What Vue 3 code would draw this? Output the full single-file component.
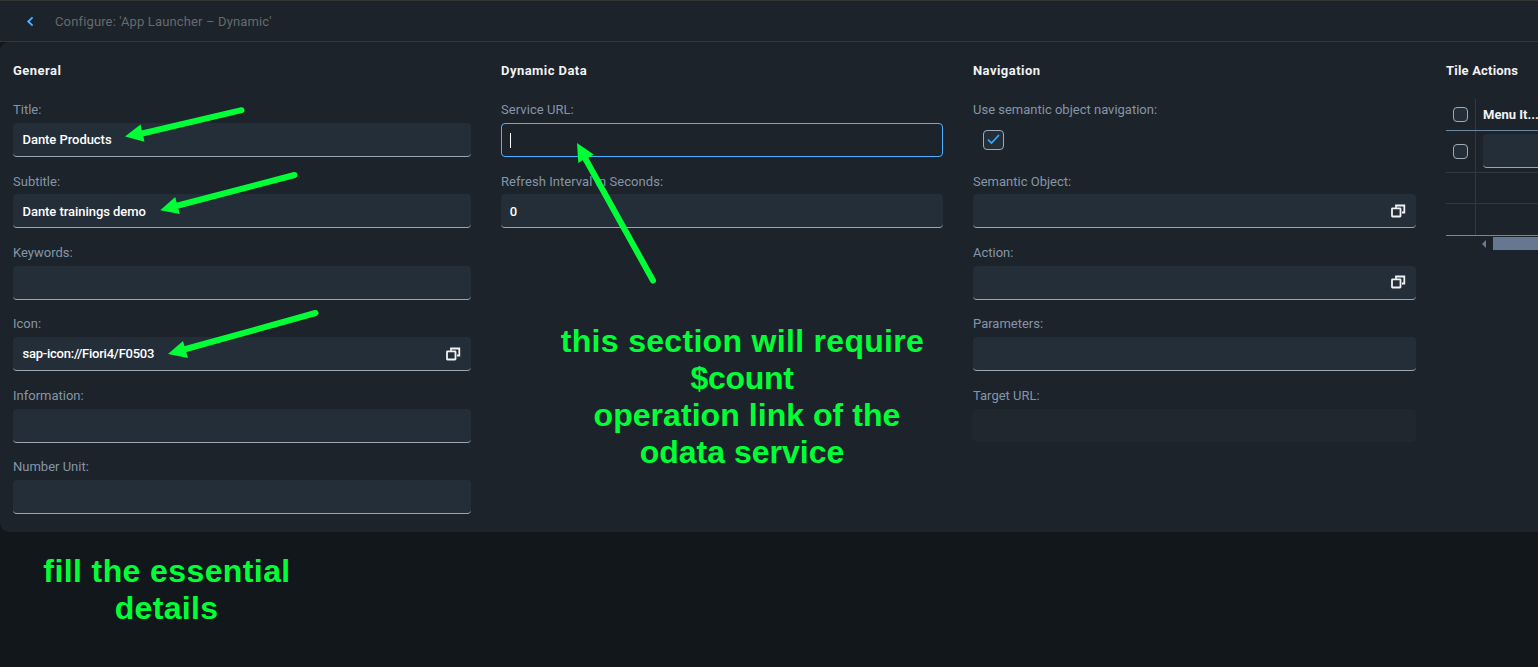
<script setup>
const general = [
  { label: 'Title:', value: 'Dante Products' },
  { label: 'Subtitle:', value: 'Dante trainings demo' },
  { label: 'Keywords:' },
  { label: 'Icon:', value: 'sap-icon://Fiori4/F0503', help: true, tight: true },
  { label: 'Information:' },
  { label: 'Number Unit:' },
]
const dynamicData = [
  { label: 'Service URL:', focused: true },
  { label: 'Refresh Interval in Seconds:', value: '0' },
]
const navigation = [
  { label: 'Use semantic object navigation:', check: true },
  { label: 'Semantic Object:', help: true },
  { label: 'Action:', help: true },
  { label: 'Parameters:' },
  { label: 'Target URL:', disabled: true },
]
const sections = [
  { title: 'General', cls: 'general', fields: general },
  { title: 'Dynamic Data', cls: 'dynamic', fields: dynamicData },
  { title: 'Navigation', cls: 'navigation', fields: navigation },
]
</script>

<template>
  <div class="page">
    <header class="bar">
      <svg class="back" width="8" height="11" viewBox="0 0 8 11"><path d="M6.600 1.300 2.200 5.500l4.400 4.200" /></svg>
      <span class="bar-title">Configure: 'App Launcher – Dynamic'</span>
    </header>
    <main class="panel">
      <section v-for="s in sections" :key="s.title" :class="['section', s.cls]">
        <h2>{{ s.title }}</h2>
        <div v-for="f in s.fields" :key="f.label" class="field">
          <label>{{ f.label }}</label>
          <div v-if="f.check" class="check-wrap">
            <div class="checkbox checked">
              <svg width="13" height="11" viewBox="0 0 13 11"><path d="M1 5.700 4.500 9 12 1" /></svg>
            </div>
          </div>
          <div v-else :class="['input', { focused: f.focused, disabled: f.disabled }]">
            <i v-if="f.focused" class="caret"></i>
            <span :class="{ tight: f.tight }">{{ f.value }}</span>
            <svg v-if="f.help" class="help" width="15" height="14" viewBox="0 0 15 14">
              <path d="M5 3.800V1.500H13.300V8.500H11" />
              <rect x="1" y="4.300" width="8.500" height="8.200" rx="0.500" />
            </svg>
          </div>
        </div>
      </section>
      <section class="section tiles">
        <h2>Tile Actions</h2>
        <div class="table">
          <div class="row head">
            <div class="sel"><div class="checkbox small"></div></div>
            <div class="cell">Menu It...</div>
          </div>
          <div class="row first">
            <div class="sel"><div class="checkbox small"></div></div>
            <div class="cell"><div class="input"></div></div>
          </div>
          <div class="row second"><div class="sel"></div></div>
          <div class="row third"><div class="sel"></div></div>
        </div>
        <div class="scroll">
          <svg width="4" height="8" viewBox="0 0 4 8"><path d="M4 0v8L0 4z" /></svg>
          <div class="thumb"></div>
        </div>
      </section>
    </main>

    <svg class="arrows" width="1538" height="667" viewBox="0 0 1538 667">
      <path d="M241.500 110.200 140 134" /><polygon points="125,136.600 140.500,124.500 144.500,141.700" />
      <path d="M294.500 175 176 206" /><polygon points="160.300,210.300 175.200,197 179.800,214" />
      <path d="M315.500 313 184 349.500" /><polygon points="168,354 183,341 188,358" />
      <path d="M653 280.500 585 158" /><polygon points="577,143 593.700,154.400 588,158 583,160 578.300,163" />
    </svg>
    <div class="note note-service">
      <div class="l1">this section will require</div>
      <div class="l2">$count</div>
      <div class="l3">operation link of the</div>
      <div>odata service</div>
    </div>
    <div class="note note-fill">fill the essential<div class="l5">details</div></div>
  </div>
</template>

<style>
body {
  margin: 0;
  background: #12171b;
  overflow: hidden;
}
</style>

<style scoped>
* {
  box-sizing: border-box;
}
.page {
  position: relative;
  width: 1538px;
  height: 667px;
  overflow: hidden;
  background: #12171b;
  font: 13px/18px "Roboto", "Liberation Sans", sans-serif;
  color: #fff;
}
.bar {
  height: 42px;
  display: flex;
  align-items: center;
  padding-left: 26px;
  border-top: 1px solid #343636;
  border-bottom: 1px solid #2e3742;
  background: #1d232a;
}
.back {
  margin-right: 21px;
}
.back path {
  fill: none;
  stroke: #4db1ff;
  stroke-width: 1.8;
}
.bar-title {
  padding-top: 2px;
  letter-spacing: 0.14px;
  color: #666a6e;
}
.panel {
  height: 490px;
  display: flex;
  border-radius: 9px 0 0 9px;
  background: #1d232a;
  padding: 19px 0 0 13px;
}
.section {
  flex: none;
}
.general {
  width: 458px;
  margin-right: 30px;
}
.dynamic {
  width: 442px;
  margin-right: 30px;
}
.navigation {
  width: 443px;
  margin-right: 30px;
}
.tiles {
  width: 110px;
}
h2 {
  margin: 0 0 19px;
  font-size: 13px;
  line-height: 19px;
  font-weight: 700;
  letter-spacing: 0.45px;
  color: #f0f2f4;
}
.tiles h2 {
  letter-spacing: 0.2px;
}
.field {
  height: 71.4px;
}
label {
  display: block;
  height: 24px;
  padding-top: 0.2px;
  line-height: 22px;
  color: #8396a8;
}
.dynamic label {
  letter-spacing: 0.06px;
}
.input {
  height: 34px;
  display: flex;
  align-items: center;
  padding: 0 10px 0 9.500px;
  border: 0 solid #9aa7b2;
  border-bottom-width: 1px;
  border-radius: 4px;
  background: #242e38;
  font-weight: 500;
}
.input span {
  margin-top: 1.400px;
  letter-spacing: -0.05px;
}
.dynamic .input span {
  margin-left: -0.7px;
}
.input .tight {
  letter-spacing: -0.24px;
}
.input.focused {
  border: 1px solid #4db1ff;
  background: #1d232a;
  padding-left: 8px;
}
.input.disabled {
  height: 33px;
  border: 0;
  background: #20272e;
}
.caret {
  width: 1px;
  height: 15px;
  background: #fff;
}
.help {
  margin-left: auto;
  margin-right: 0;
  fill: none;
  stroke: #f0f2f4;
  stroke-width: 1.8;
}
.check-wrap {
  padding: 6.600px 0 0 10px;
}
.checkbox {
  width: 21px;
  height: 20.500px;
  display: flex;
  align-items: center;
  justify-content: center;
  border: 1px solid #9eabb6;
  border-radius: 4px;
  background: #242e38;
}
.checkbox.small {
  width: 15px;
  height: 15px;
}
.checkbox path {
  fill: none;
  stroke: #3fa5ff;
  stroke-width: 1.7;
}
.row {
  display: flex;
  border-bottom: 1px solid #303841;
}
.sel {
  width: 30px;
  display: flex;
  align-items: center;
  justify-content: center;
  border-right: 1px solid #303841;
}
.cell {
  flex: 1;
  padding-left: 7px;
  display: flex;
  align-items: center;
  white-space: nowrap;
  font-weight: 700;
  color: #f0f2f4;
}
.first .cell {
  align-items: flex-start;
  padding-top: 3px;
}
.cell .input {
  flex: 1;
}
.head {
  height: 32px;
  border-color: #6d87a0;
}
.first {
  height: 42px;
}
.second {
  height: 31px;
}
.third {
  height: 32px;
  border-color: #74899a;
}
.scroll {
  display: flex;
  align-items: center;
  height: 13px;
  margin-top: 1px;
  padding-left: 36px;
}
.scroll path {
  fill: #697b93;
}
.thumb {
  flex: 1;
  height: 13px;
  margin-left: 7px;
  background: #667891;
}
.arrows {
  position: absolute;
  inset: 0;
  stroke: #00ff37;
  stroke-width: 6;
  stroke-linecap: round;
  fill: none;
}
.arrows polygon {
  fill: #00ff37;
  stroke: none;
}
.note {
  position: absolute;
  font: bold 32px/37px "Liberation Sans", Arial, sans-serif;
  color: #00ff37;
  text-align: center;
  white-space: nowrap;
}
.note-service {
  left: 541px;
  top: 323px;
  width: 402px;
}
.l1 {
  padding-left: 1px;
  letter-spacing: 0.31px;
}
.l2 {
  letter-spacing: -0.3px;
}
.l3 {
  padding-left: 10px;
  letter-spacing: 0.05px;
}
.note-fill {
  left: 27px;
  top: 553px;
  width: 280px;
  letter-spacing: 0.4px;
}
.l5 {
  padding-right: 1px;
  letter-spacing: 0.3px;
}
</style>
